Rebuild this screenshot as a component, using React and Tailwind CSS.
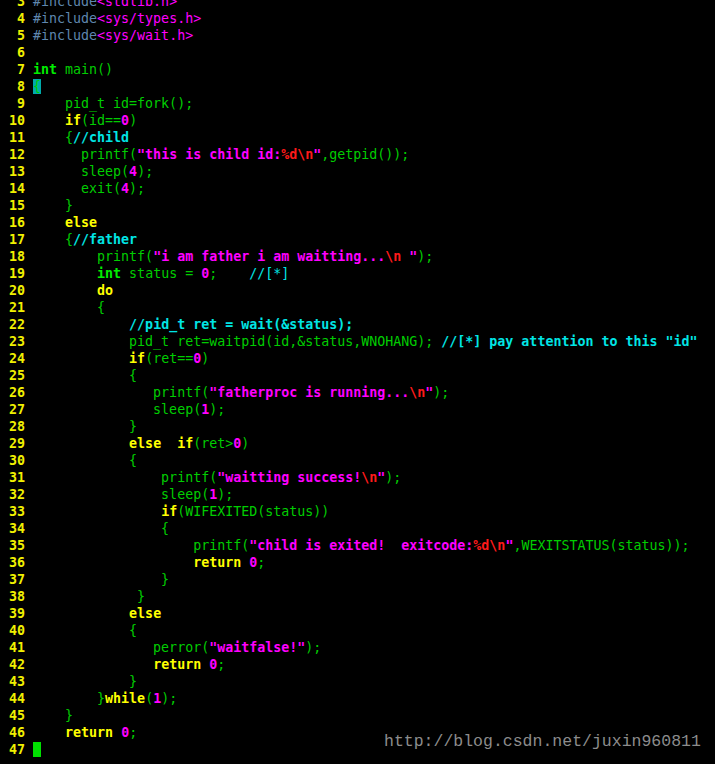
import React from "react";

const G = "text-[#00cd00]";
const GB = "text-[#00ee00] font-bold";
const Y = "text-[#ffff00] font-bold";
const M = "text-[#ff00ff] font-bold";
const MI = "text-[#ff00ff]";
const R = "text-[#ff1a1a] font-bold";
const C = "text-[#00e5e5] font-bold";
const CN = "text-[#00e5e5]";
const P = "text-[#5f87af]";

const lines = [
  [[P, "#include"], [MI, "<stdlib.h>"]],
  [[P, "#include"], [MI, "<sys/types.h>"]],
  [[P, "#include"], [MI, "<sys/wait.h>"]],
  [],
  [[GB, "int"], [G, " main()"]],
  "CURSOR_BRACE",
  [[G, "    pid_t id=fork();"]],
  [[G, "    "], [Y, "if"], [G, "(id=="], [M, "0"], [G, ")"]],
  [[G, "    {"], [C, "//child"]],
  [[G, "      printf("], [M, "\"this is child id:"], [R, "%d\\n"], [M, "\""], [G, ",getpid());"]],
  [[G, "      sleep("], [M, "4"], [G, ");"]],
  [[G, "      exit("], [M, "4"], [G, ");"]],
  [[G, "    }"]],
  [[G, "    "], [Y, "else"]],
  [[G, "    {"], [C, "//father"]],
  [[G, "        printf("], [M, "\"i am father i am waitting..."], [R, "\\n"], [M, " \""], [G, ");"]],
  [[G, "        "], [GB, "int"], [G, " status = "], [M, "0"], [G, ";    "], [CN, "//[*]"]],
  [[G, "        "], [Y, "do"]],
  [[G, "        {"]],
  [[G, "            "], [C, "//pid_t ret = wait(&status);"]],
  [[G, "            pid_t ret=waitpid(id,&status,WNOHANG); "], [C, "//[*] pay attention to this \"id\""]],
  [[G, "            "], [Y, "if"], [G, "(ret=="], [M, "0"], [G, ")"]],
  [[G, "            {"]],
  [[G, "               printf("], [M, "\"fatherproc is running..."], [R, "\\n"], [M, "\""], [G, ");"]],
  [[G, "               sleep("], [M, "1"], [G, ");"]],
  [[G, "            }"]],
  [[G, "            "], [Y, "else"], [G, "  "], [Y, "if"], [G, "(ret>"], [M, "0"], [G, ")"]],
  [[G, "            {"]],
  [[G, "                printf("], [M, "\"waitting success!"], [R, "\\n"], [M, "\""], [G, ");"]],
  [[G, "                sleep("], [M, "1"], [G, ");"]],
  [[G, "                "], [Y, "if"], [G, "(WIFEXITED(status))"]],
  [[G, "                {"]],
  [[G, "                    printf("], [M, "\"child is exited!  exitcode:"], [R, "%d\\n"], [M, "\""], [G, ",WEXITSTATUS(status));"]],
  [[G, "                    "], [Y, "return"], [G, " "], [M, "0"], [G, ";"]],
  [[G, "                }"]],
  [[G, "             }"]],
  [[G, "            "], [Y, "else"]],
  [[G, "            {"]],
  [[G, "               perror("], [M, "\"waitfalse!\""], [G, ");"]],
  [[G, "               "], [Y, "return"], [G, " "], [M, "0"], [G, ";"]],
  [[G, "            }"]],
  [[G, "        }"], [Y, "while"], [G, "("], [M, "1"], [G, ");"]],
  [[G, "    }"]],
  [[G, "    "], [Y, "return"], [G, " "], [M, "0"], [G, ";"]],
  "CURSOR_BLOCK",
];

function Line({ n, content }) {
  let body;
  if (content === "CURSOR_BRACE") {
    body = <span className="bg-[#00aaaa] text-[#00cd00]">{"{"}</span>;
  } else if (content === "CURSOR_BLOCK") {
    body = <span className="bg-[#00e000]">{" "}</span>;
  } else {
    body = content.map(([cls, t], i) => (
      <span key={i} className={cls}>
        {t}
      </span>
    ));
  }
  return (
    <div className="h-[17px] leading-[17px] whitespace-pre">
      <span className="text-[#f0f000] font-bold">{String(n).padStart(3, " ") + " "}</span>
      {body}
    </div>
  );
}

export default function App() {
  return (
    <div className="relative w-[715px] h-[764px] overflow-hidden bg-black">
      <div
        className="-mt-[7px] pl-[1px] text-[13.3px]"
        style={{ fontFamily: '"DejaVu Sans Mono", monospace' }}
      >
        {lines.map((c, i) => (
          <Line key={i} n={i + 3} content={c} />
        ))}
      </div>
      <div
        className="absolute left-[384px] top-[731px] text-[16.5px] leading-[22px] text-[#8c8c8c] whitespace-pre"
        style={{ fontFamily: '"Liberation Mono", monospace' }}
      >
        http://blog.csdn.net/juxin960811
      </div>
    </div>
  );
}
